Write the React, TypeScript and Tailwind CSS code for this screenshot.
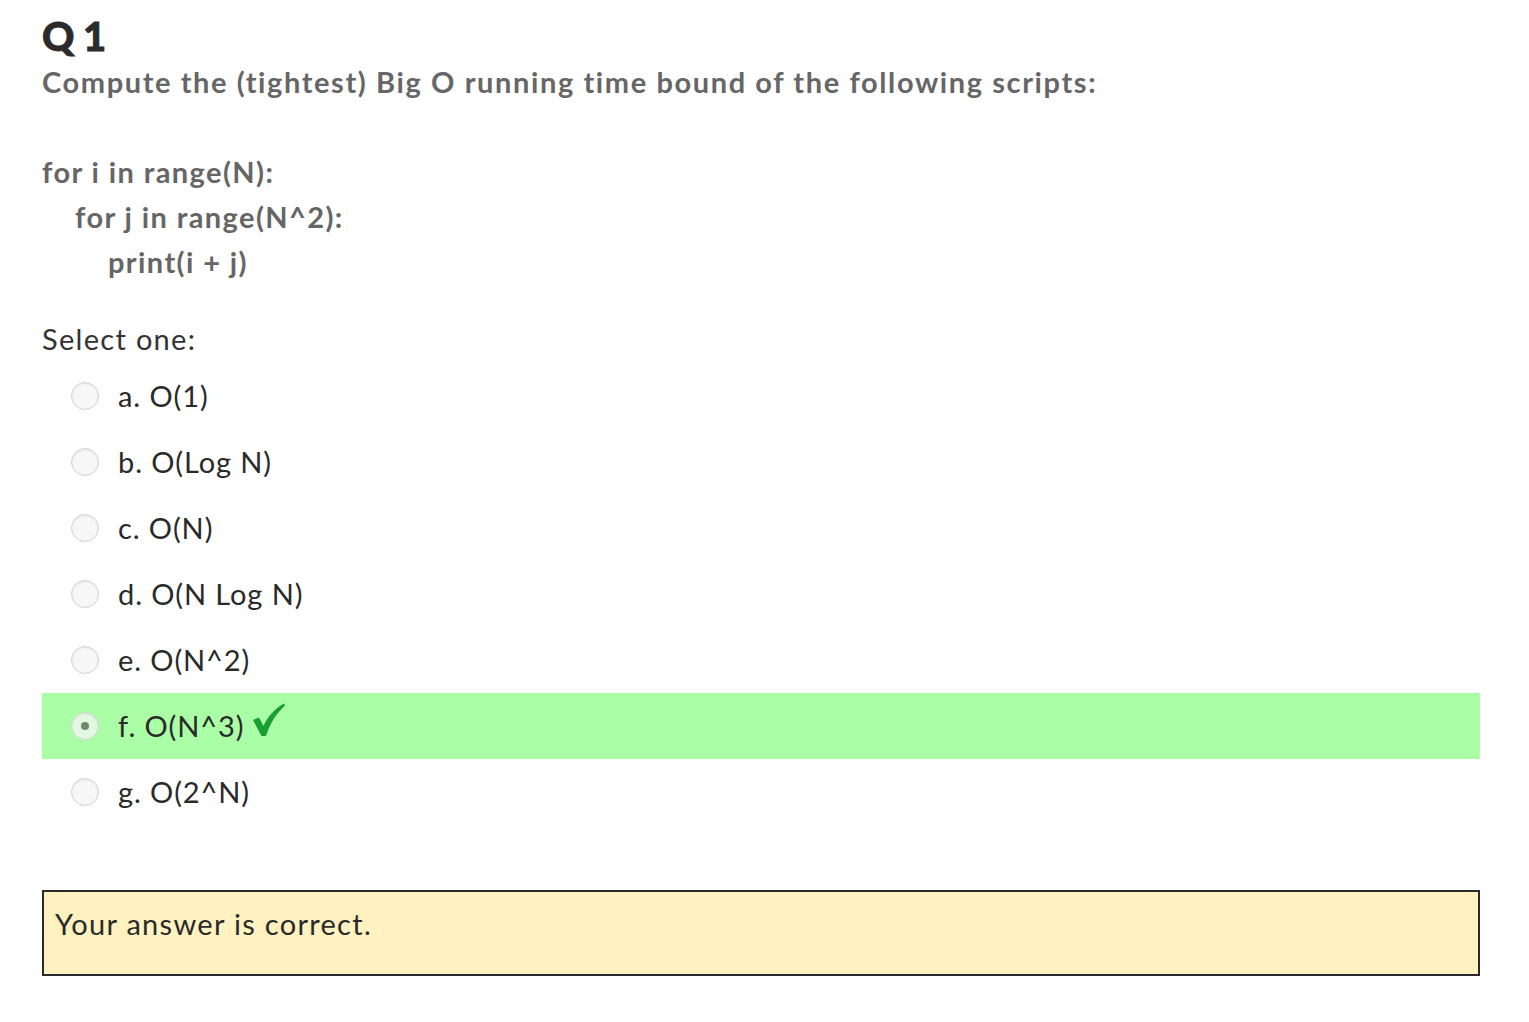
import { FC } from "react";

const options = [
  { key: "a", label: "O(1)" },
  { key: "b", label: "O(Log N)" },
  { key: "c", label: "O(N)" },
  { key: "d", label: "O(N Log N)" },
  { key: "e", label: "O(N^2)" },
  { key: "f", label: "O(N^3)", picked: true },
  { key: "g", label: "O(2^N)" },
];

const Radio: FC<{ checked?: boolean }> = ({ checked }) => (
  <span
    className={`flex h-[28px] w-[28px] shrink-0 items-center justify-center rounded-full border border-[#d2d2d2] shadow-[inset_0_1px_2px_rgba(0,0,0,0.08)] ${
      checked ? "bg-[#e4f7e2]" : "bg-[#f7f7f7]"
    }`}
  >
    {checked && <span className="h-[8px] w-[8px] rounded-full bg-[#6e8a6e]" />}
  </span>
);

const Tick: FC = () => (
  <svg width="34" height="34" viewBox="0 0 34 34" className="-mt-[12px] ml-[8px]">
    <path
      d="M1 17 L7 14.5 L11.5 23 C16 13 23 5.5 32 0.5 L33 2.5 C25 10 18.5 19 14 33 L9.5 33 Z"
      fill="#17a031"
    />
  </svg>
);

const App: FC = () => {
  return (
    <div className="min-h-screen bg-white pl-[42px] pr-[49px] pt-[14px] font-['Lato',sans-serif] tracking-[1.3px]">
      <h1 className="text-[40px] font-black leading-[44px] tracking-[-0.5px] text-[#2b2b2b] [-webkit-text-stroke:0.8px_#2b2b2b]">
        Q 1
      </h1>
      <p className="mt-[6px] text-[29px] font-bold leading-[36px] tracking-[1.6px] text-[#666]">
        Compute the (tightest) Big O running time bound of the following scripts:
      </p>

      <div className="mt-[49px] text-[29px] font-bold leading-[45px] tracking-[1.4px] text-[#666]">
        <div>for i in range(N):</div>
        <div className="pl-[33px]">for j in range(N^2):</div>
        <div className="pl-[66px]">print(i + j)</div>
      </div>

      <div className="mt-[35px] text-[29px] leading-[40px] text-[#333]">Select one:</div>

      <div className="mt-[4px] flex flex-col">
        {options.map((o) => (
          <div
            key={o.key}
            className={`flex h-[66px] items-center pl-[29px] text-[29px] tracking-[0.9px] text-[#2a2a2a] ${
              o.picked ? "bg-[#aaffa6]" : ""
            }`}
          >
            <Radio checked={o.picked} />
            <span className="ml-[19px]">
              {o.key}. {o.label}
            </span>
            {o.picked && <Tick />}
          </div>
        ))}
      </div>

      <div className="mt-[65px] h-[86px] border-2 border-[#2a2a2a] bg-[#fff2c0] px-[11px] pt-[12px] text-[29px] leading-[40px] text-[#2a2a2a]">
        Your answer is correct.
      </div>
    </div>
  );
};

export default App;
